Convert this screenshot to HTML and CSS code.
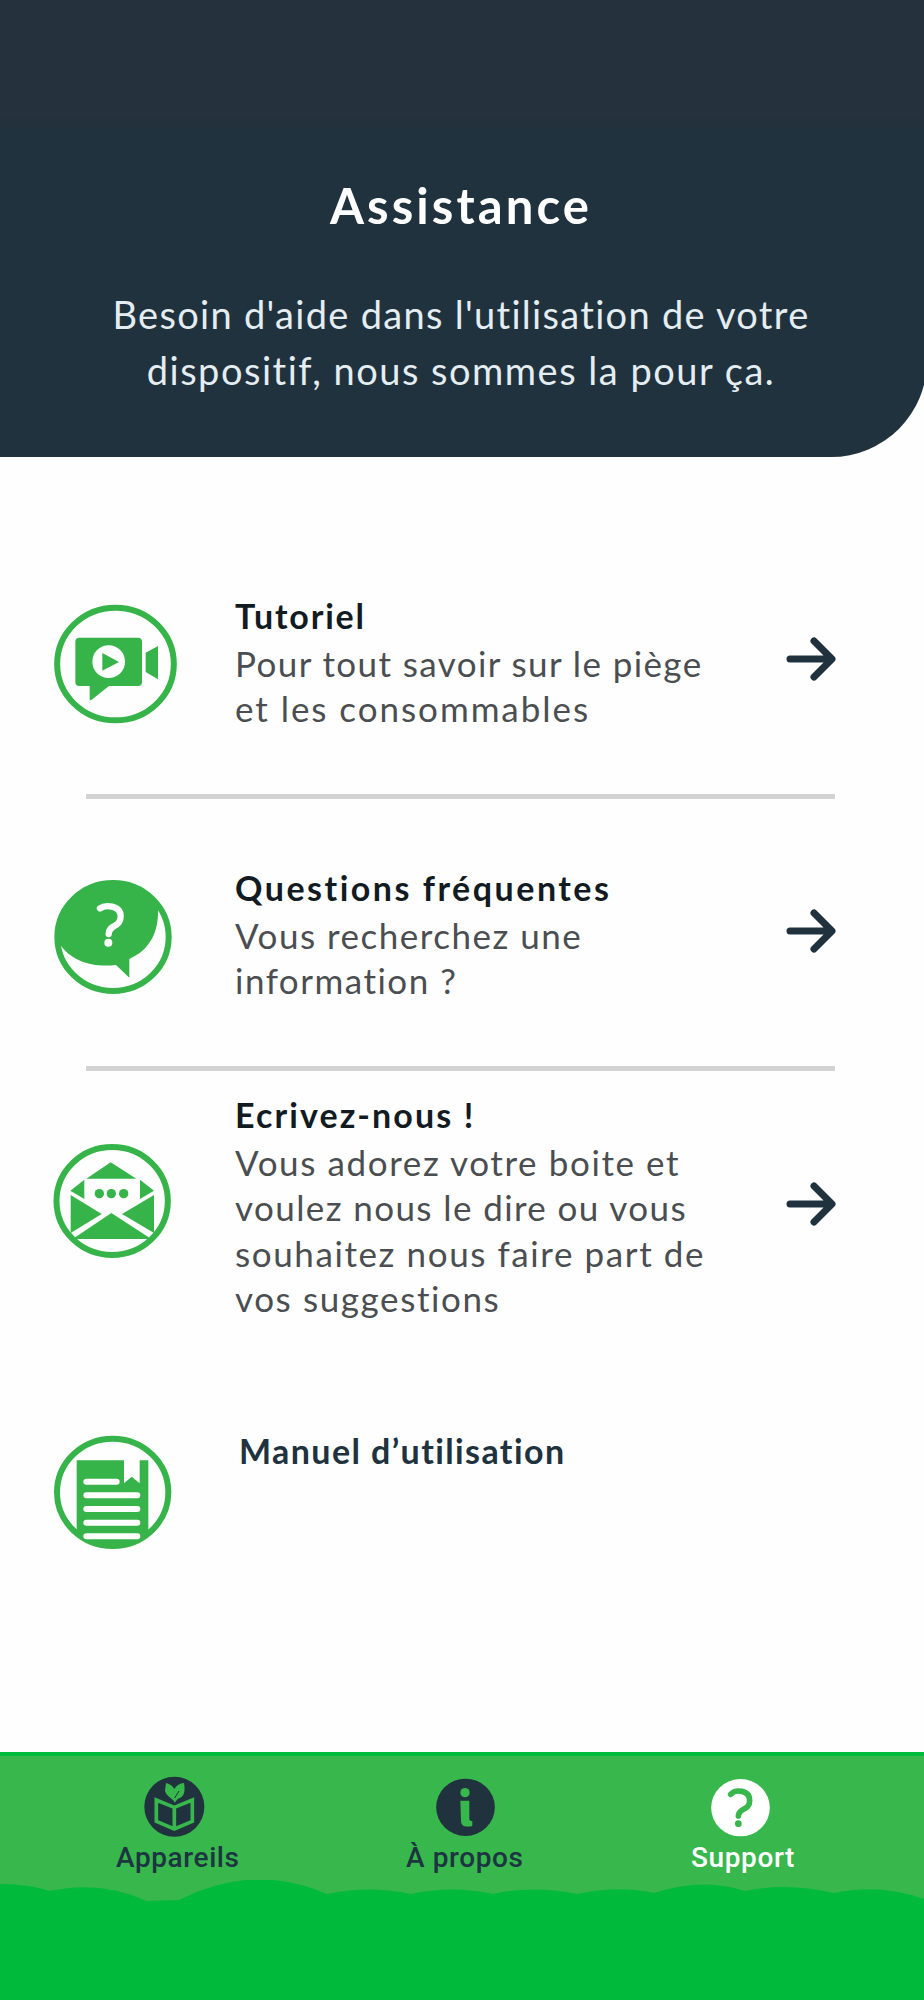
FILE: index.html
```html
<!DOCTYPE html>
<html lang="fr">
<head>
    <meta charset="UTF-8">
    <meta name="viewport" content="width=device-width, initial-scale=1.0">
    <title>Assistance</title>
    <link rel="stylesheet" href="styles.css">
</head>
<body>
    <header class="header">
        <h1>Assistance</h1>
        <p><span class="line h-1">Besoin d'aide dans l'utilisation de votre</span><span class="line h-2">dispositif, nous sommes la pour ça.</span></p>
    </header>

    <main class="list">
        <!-- Tutoriel -->
        <section class="row row-tuto">
            <svg class="icon" viewBox="0 0 450 450">
                <ellipse class="ring" cx="226.500" cy="222" rx="175" ry="169"/>
                <path d="M118 143H294Q306 143 306 155V276Q306 288 294 288H207L154 330Q149 333 149 326V288H118Q106 288 106 276V155Q106 143 118 143Z"/>
                <path d="M317 188L354 168V268L317 246Z"/>
                <circle class="white" cx="206" cy="215" r="49"/>
                <path d="M187 189V242L237 216Z"/>
            </svg>
            <div class="text">
                <h2 class="t-1">Tutoriel</h2>
                <p><span class="line a-1">Pour tout savoir sur le piège</span><span class="line a-2">et les consommables</span></p>
            </div>
            <svg class="arrow" viewBox="0 0 52 46"><path d="M5 23H46M29 5L47 23L29 41"/></svg>
        </section>

        <!-- Questions -->
        <section class="row row-faq">
            <svg class="icon" viewBox="0 0 450 450">
                <ellipse class="ring" cx="219" cy="216" rx="167" ry="162"/>
                <path d="M55 230C48 130 110 54 219 52C290 52 330 85 354 130C357 200 330 255 268 282V338L228 300C160 308 90 290 55 230Z"/>
                <path class="mark" d="M180 130C195 119 242 120 242 154C242 188 206 178 206 207"/>
                <circle class="white" cx="205" cy="233" r="12"/>
            </svg>
            <div class="text">
                <h2 class="t-2">Questions fréquentes</h2>
                <p><span class="line b-1">Vous recherchez une</span><span class="line b-2">information ?</span></p>
            </div>
            <svg class="arrow" viewBox="0 0 52 46"><path d="M5 23H46M29 5L47 23L29 41"/></svg>
        </section>

        <!-- Contact -->
        <section class="row row-mail">
            <svg class="icon" viewBox="0 0 450 450">
                <ellipse class="ring" cx="216.500" cy="213" rx="167" ry="162"/>
                <path d="M212 97L289 146H139Z"/>
                <path d="M133 149V207L91 182Z"/>
                <path d="M300 149V207L342 182Z"/>
                <path d="M92 195L185 252L92 309Z"/>
                <path d="M342 195L246 252L342 309Z"/>
                <path d="M214 249L334 327H98Z"/>
                <circle cx="178" cy="191" r="14"/>
                <circle cx="214" cy="191" r="14"/>
                <circle cx="251" cy="191" r="14"/>
            </svg>
            <div class="text">
                <h2 class="t-3">Ecrivez-nous !</h2>
                <p><span class="line c-1">Vous adorez votre boite et</span><span class="line c-2">voulez nous le dire ou vous</span><span class="line c-3">souhaitez nous faire part de</span><span class="line c-4">vos suggestions</span></p>
            </div>
            <svg class="arrow" viewBox="0 0 52 46"><path d="M5 23H46M29 5L47 23L29 41"/></svg>
        </section>

        <!-- Manuel -->
        <section class="row row-manual">
            <svg class="icon" viewBox="0 0 450 450">
                <ellipse class="ring" cx="218" cy="217" rx="167" ry="161"/>
                <path d="M110 121H252V190L275 170L299 190V121H325V335Q280 380 218 380Q155 380 110 335Z"/>
                <path class="stripe" d="M139 185H230M139 226H292M139 267H292M139 308H292M139 349H292"/>
            </svg>
            <div class="text">
                <h2 class="t-4">Manuel d’utilisation</h2>
            </div>
        </section>
    </main>

    <nav class="nav">
        <a class="nav-item">
            <svg viewBox="0 90 600 210">
                <circle cx="223" cy="200" r="90"/>
                <path class="book" d="M223 202L169 180V244L223 267L277 244V180ZM223 202V267"/>
                <path class="leaf" d="M224 188C220 174 197 171 195 151L198 129Q216 134 223 147Q233 131 252 129C257 156 252 171 233 177Z"/>
                <path class="vein" d="M224 174L237 153"/>
            </svg>
            <span class="n-1">Appareils</span>
        </a>
        <a class="nav-item">
            <svg viewBox="0 90 600 210">
                <ellipse cx="226.500" cy="202" rx="88" ry="86"/>
                <circle class="green" cx="225" cy="158" r="14"/>
                <path class="green" d="M211 182H238V236Q238 243 247 243V258C228 262 213 260 213 242Z"/>
            </svg>
            <span class="n-2">À propos</span>
        </a>
        <a class="nav-item active">
            <svg viewBox="0 90 600 210">
                <ellipse cx="241.500" cy="203" rx="88" ry="86"/>
                <path class="question" d="M212 163C226 147 269 149 269 182C269 212 235 203 235 228"/>
                <circle class="green" cx="235" cy="251" r="10"/>
            </svg>
            <span class="n-3">Support</span>
        </a>
    </nav>

    <svg class="hills" viewBox="0 0 924 120">
        <path d="M0 4Q28 4 50 11Q100 0 147 21L179 20Q253 -18 327 14Q369 5 411 14Q452 5 493 14Q535 5 577 14Q619 5 654 13Q702 -3 745 11Q788 2 834 13Q880 3 924 19V120H0Z"/>
    </svg>
</body>
</html>
```
FILE: styles.css
```css
* {
    box-sizing: border-box;
}
body {
    font-family: Lato, 'Liberation Sans', sans-serif;
    background-color: #fefefe;
    margin: 0;
    height: 2000px;
    display: flex;
    flex-direction: column;
    overflow: hidden;
}
h1, h2, p {
    margin: 0;
}
.line {
    display: block;
    white-space: nowrap;
}
.header {
    width: 927px;
    height: 457px;
    padding: 175px 5px 0 0;
    background: linear-gradient(#25313c 0, #25313c 116px, #20323e 130px);
    color: white;
    text-align: center;
    border-bottom-right-radius: 96px;
}
.header h1 {
    font-size: 49px;
    line-height: 60px;
    letter-spacing: 3.1px;
}
.header p {
    margin-top: 52px;
    font-size: 38px;
    line-height: 55.5px;
    letter-spacing: 1.3px;
    color: #e4edf1;
}
.header .h-2 {
    letter-spacing: 1.5px;
}
.list {
    height: 1295px;
    padding-top: 133px;
}
.row {
    display: grid;
    grid-template-columns: 150px 505px 52px;
    column-gap: 45px;
    align-items: start;
    margin-left: 40px;
}
.row-tuto {
    height: 275px;
}
.row-faq {
    height: 265px;
}
.row-mail {
    height: 290px;
}
.row-tuto, .row-faq {
    background: linear-gradient(#d3d3d3, #d3d3d3) no-repeat;
    background-size: 749px 5px;
}
.row-tuto {
    background-position: 46px 204px;
}
.row-faq {
    background-position: 46px 201px;
}
.icon {
    width: 150px;
    height: 150px;
    fill: #36b449;
}
.ring {
    fill: none;
    stroke: #36b449;
    stroke-width: 18;
}
.white {
    fill: white;
}
.mark {
    fill: none;
    stroke: white;
    stroke-width: 19;
    stroke-linecap: round;
}
.stripe {
    fill: none;
    stroke: white;
    stroke-width: 18;
    stroke-linecap: round;
}
.text {
    white-space: nowrap;
}
.text h2 {
    font-size: 34px;
    line-height: 46px;
    color: #131b22;
}
.text p {
    font-size: 35px;
    line-height: 45.4px;
    color: #4b4e51;
    margin-top: 2px;
}

/* Espacement des lettres */
.t-1 {
    letter-spacing: 1.8px;
}
.t-2 {
    letter-spacing: 2.5px;
}
.t-3 {
    letter-spacing: 2.1px;
}
.t-4 {
    letter-spacing: 1.4px;
}
.a-1, .c-2 {
    letter-spacing: 1.4px;
}
.a-2 {
    letter-spacing: 1.95px;
}
.b-1, .b-2 {
    letter-spacing: 1.5px;
}
.c-1, .c-3, .c-4 {
    letter-spacing: 1.6px;
}

.row-tuto .text {
    padding-top: 3px;
}
.row-faq .text {
    padding-top: 0;
}
.row-mail .text {
    margin-top: -38px;
}
.row-manual .text {
    padding: 8px 0 0 4px;
}
.row-manual h2 {
    color: #20323e;
}
.arrow {
    width: 52px;
    height: 46px;
    margin: 46px 0 0 0;
    fill: none;
    stroke: #20323e;
    stroke-width: 7;
    stroke-linecap: round;
    stroke-linejoin: round;
}
.row-faq .arrow {
    margin-top: 43px;
}
.row-mail .arrow {
    margin-top: 51px;
}
.nav {
    height: 128px;
    border-top: 4px solid #00bb3b;
    background-color: #38b74c;
    display: flex;
    padding: 14px 0 0 100px;
    color: #1d3441;
    font: 500 28px/36px Roboto, sans-serif;
    letter-spacing: 0.6px;
}
.nav-item {
    width: 200px;
    margin-right: 90px;
}
.nav-item + .nav-item {
    margin-right: 70px;
}
.nav-item svg {
    display: block;
    width: 200px;
    height: 70px;
    fill: #20323e;
}
.nav-item span {
    display: block;
    padding-left: 16px;
    white-space: nowrap;
}
.nav-item.active {
    color: white;
}
.nav-item.active span {
    padding-left: 31px;
}
.nav-item.active svg {
    fill: white;
}
.nav-item .green {
    fill: #38b74c;
}
.book {
    fill: none;
    stroke: #38b74c;
    stroke-width: 11;
}
.leaf {
    fill: #38b74c;
}
.vein {
    stroke: #20323e;
    stroke-width: 3;
}
.question {
    fill: none;
    stroke: #38b74c;
    stroke-width: 17;
    stroke-linecap: round;
}
.hills {
    display: block;
    width: 924px;
    height: 120px;
    fill: #00bb3b;
    background-color: #38b74c;
}
```
